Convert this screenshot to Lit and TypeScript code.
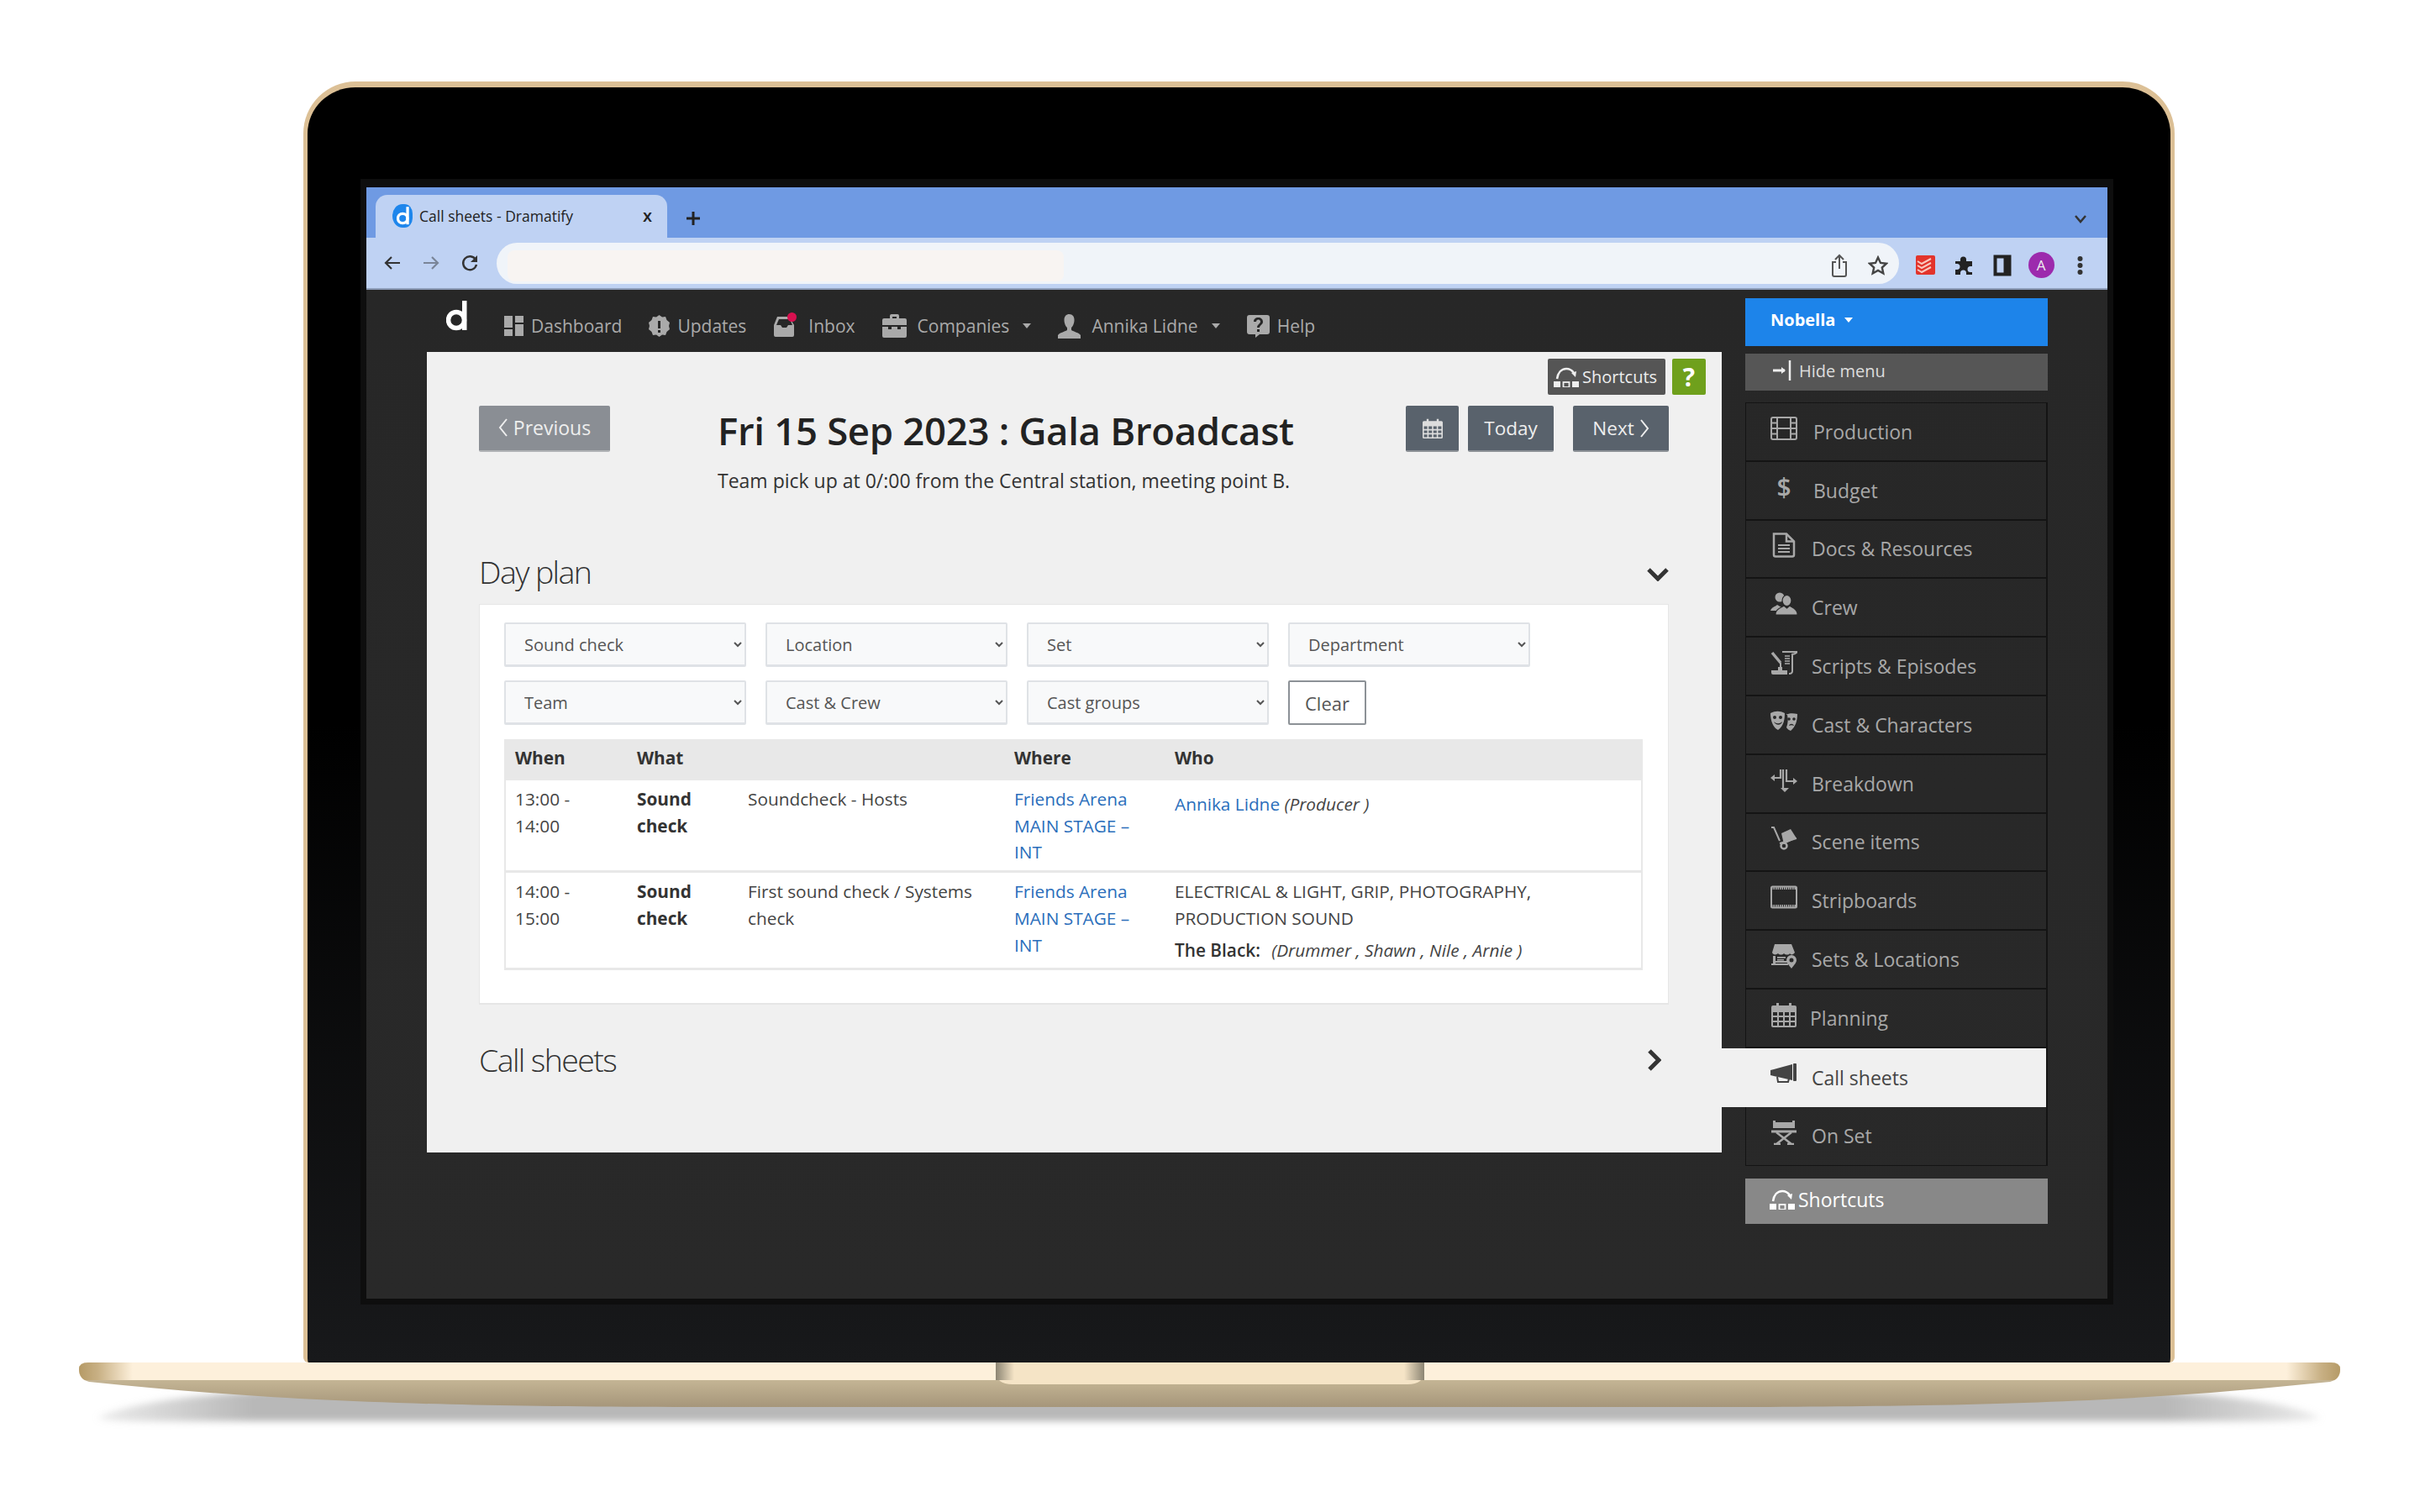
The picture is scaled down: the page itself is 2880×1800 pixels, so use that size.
import { LitElement, html, css } from "lit";
import { customElement } from "lit/decorators.js";

const sideIcons: Record<string, any> = {
  film: html`<svg width="32" height="28" viewBox="0 0 32 28" fill="none" stroke="currentColor" stroke-width="2"><rect x="1" y="1" width="30" height="26" rx="2"/><path d="M8 1v26M24 1v26M1 7.500h7M1 14h7M1 20.500h7M24 7.500h7M24 14h7M24 20.500h7M8 14h16"/></svg>`,
  dollar: html`<span class="dollar">$</span>`,
  doc: html`<svg width="32" height="30" viewBox="0 0 32 30" fill="none" stroke="currentColor" stroke-width="2.500"><path d="M4 1.500h15l9 9v16a2 2 0 0 1-2 2H6a2 2 0 0 1-2-2z"/><path d="M19 1.500v9h9"/><path stroke-width="1.800" d="M9 15h14M9 19h14M9 23h14"/></svg>`,
  crew: html`<svg width="32" height="28" viewBox="0 0 32 28" fill="currentColor"><circle cx="11" cy="6" r="5.500"/><path d="M0 22c1-4 6-5 8-7l5 3-2 4z"/><ellipse cx="19.500" cy="10" rx="5.500" ry="6.500" stroke="#272727" stroke-width="1.200"/><path d="M16 16l3.500 3 3.500-3c2 2 8 3 9 9v2H6v-2c1-6 8-7 10-9z" stroke="#272727" stroke-width="1.200"/></svg>`,
  script: html`<svg width="32" height="30" viewBox="0 0 32 30" fill="none" stroke="currentColor" stroke-width="2"><path d="M14 2h18c-1 2-5 3-7 3M26 4v21c0 2-2 3-4 3"/><path fill="currentColor" stroke="none" d="M1 24h19v5H3a2 2 0 0 1-2-2zM9 20h5v4H9z"/><path stroke-width="3.500" d="M2 3l10 12"/><path stroke-width="1.400" d="M17 7h6M17 10h6M17 13h6M17 16h6"/><path d="M12 15v6"/></svg>`,
  masks: html`<svg width="32" height="26" viewBox="0 0 32 26" fill="currentColor"><path d="M0 3c6-3 11-3 17 0 0 7-1 15-8 20C3 20 0 12 0 3z"/><path d="M18 5c4-2 9-2 14-1 0 8-2 15-8 20-2-1-4-2-5-4 2-5 2-10 1-15z"/><g fill="#272727"><circle cx="5" cy="8" r="2"/><circle cx="12" cy="8" r="2"/><path d="M4 13c3 3 7 3 10 0-1 5-8 5-10 0z"/><circle cx="22" cy="10" r="1.800"/><circle cx="28" cy="10" r="1.800"/><path d="M22 18c1-3 5-3 6 0-2-1-4-1-6 0z"/></g></svg>`,
  split: html`<svg width="32" height="28" viewBox="0 0 32 28" fill="none" stroke="currentColor" stroke-width="2.200"><path d="M2 11h10V1M15 1v22M19 1v14h10"/><path fill="currentColor" stroke="none" d="M0 11l5-4v8zM32 15l-5-4v8zM17 28l-5-5h10z"/></svg>`,
  cart: html`<svg width="32" height="28" viewBox="0 0 32 28" fill="none" stroke="currentColor" stroke-width="2"><path d="M1 1h3l7 16"/><path fill="currentColor" stroke="none" d="M13 8l11-5 7 11-15 7z"/><path d="M11 20l20-6"/><circle cx="16" cy="23" r="3.500" stroke-width="2.500"/></svg>`,
  strip: html`<svg width="32" height="28" viewBox="0 0 32 28" fill="none" stroke="currentColor"><rect x="1" y="1.500" width="30" height="25" rx="1.500" stroke-width="2"/><path stroke-width="3" stroke-dasharray="1.500 1" d="M1 3.500h30M1 24.500h30"/></svg>`,
  store: html`<svg width="32" height="30" viewBox="0 0 32 30" fill="currentColor"><path d="M5 1h20l4 10c-2 3-5 3-6 1-1 2-5 2-7 0-2 2-5 2-7 0-2 2-6 2-7-1z"/><path d="M3 15h3v6h14v2H6v1h15v2H1v-2h2z"/><path d="M8 16h10v1.800H8zM8 19h8v1.500H8z"/><path fill-rule="evenodd" d="M25 14a6 6 0 0 1 6 6c0 3-3 6-6 10-3-4-6-7-6-10a6 6 0 0 1 6-6zm0 3.500a2.500 2.500 0 1 0 0 5 2.500 2.500 0 0 0 0-5z"/></svg>`,
  cal: html`<svg width="30" height="30" viewBox="0 0 30 30" fill="currentColor"><path fill-rule="evenodd" d="M2 4h4V1h3v3h12V1h3v3h4a2 2 0 0 1 2 2v22a2 2 0 0 1-2 2H2a2 2 0 0 1-2-2V6a2 2 0 0 1 2-2zm0 8v4h5v-4zm7 0v4h5v-4zm7 0v4h5v-4zm7 0v4h5v-4zM2 18v4h5v-4zm7 0v4h5v-4zm7 0v4h5v-4zm7 0v4h5v-4zM2 24v4h5v-4zm7 0v4h5v-4zm7 0v4h5v-4zm7 0v4h5v-4z"/></svg>`,
  mega: html`<svg width="32" height="26" viewBox="0 0 32 26" fill="currentColor"><path d="M0 8l4-1 22-6v19L4 15l-4-1z"/><rect x="27" y="0" width="4" height="21" rx="1"/><path fill="none" stroke="currentColor" stroke-width="2" d="M8 16l1 6h12l1-4"/></svg>`,
  chair: html`<svg width="32" height="30" viewBox="0 0 32 30" fill="none" stroke="currentColor" stroke-width="2.500"><path fill="currentColor" stroke="none" d="M3 1h3v2h20V1h3v9H3z"/><path stroke-width="3" d="M1 14h30"/><path d="M7 29L25 15M25 29L7 15M4 29h8M20 29h8"/></svg>`,
};

const shortcutIcon = html`<svg class="sc" width="30" height="24" viewBox="0 0 30 24" fill="currentColor"><path fill="none" stroke="currentColor" stroke-width="2.500" d="M4 14c1-7 5-12 11-12 4 0 7 2 9 5"/><path d="M21 7l6-2-1 7z"/><rect x="0" y="17" width="8" height="7"/><rect x="22" y="17" width="8" height="7"/><rect x="11.500" y="18" width="7" height="6" fill="none" stroke="currentColor" stroke-width="1.800"/></svg>`;

const logo = (c: string, w: number, h: number) => html`<svg width=${w} height=${h} viewBox="0 0 25 36"><circle cx="12" cy="23" r="9.500" fill="none" stroke=${c} stroke-width="5.500"/><path d="M19 0h5.500v35H19z" fill=${c}/></svg>`;

const caret = html`<svg class="caret" width="10" height="6" viewBox="0 0 10 6" fill="currentColor"><path d="M0 0h10L5 6z"/></svg>`;

const rows = [
  ["film", "Production", "t2"], ["dollar", "Budget", "t2"], ["doc", "Docs & Resources", ""],
  ["crew", "Crew", ""], ["script", "Scripts & Episodes", ""], ["masks", "Cast & Characters", ""],
  ["split", "Breakdown", ""], ["cart", "Scene items", ""], ["strip", "Stripboards", ""],
  ["store", "Sets & Locations", ""], ["cal", "Planning", "t0"], ["mega", "Call sheets", "on"], ["chair", "On Set", ""],
];

@customElement("app-root")
export class AppRoot extends LitElement {
  static styles = css`
    :host { display: block; width: 2880px; height: 1800px; background: #fff; overflow: hidden; font-family: "Open Sans", "Liberation Sans", sans-serif; padding-top: 97px; box-sizing: border-box; }
    svg { display: block; flex: none; }
    .lid { margin-left: 361px; width: 2227px; height: 1525px; box-sizing: border-box; border: 5px solid #dcc096; border-top-width: 7px; border-bottom: 0; border-radius: 62px 62px 6px 6px; background: linear-gradient(#000 0, #000 50%, #18191b 100%); padding: 109px 68px 0 63px; }
    .frame { background: #0e0e0e; padding: 10px 7px 7px; height: 1340px; box-sizing: border-box; }
    .screen { height: 1323px; display: flex; flex-direction: column; }
    .tabs { height: 60px; background: #6f9ae3; display: flex; align-items: flex-end; padding-left: 11px; color: #222; flex: none; position: relative; }
    .tab { width: 347px; height: 51px; background: #bfd2f3; border-radius: 14px 14px 0 0; display: flex; align-items: center; box-sizing: border-box; padding: 0 0 2px 20px; font-size: 17.500px; }
    .fav { width: 24px; height: 28px; background: #1e86ec; border-radius: 50% 40% 40% 50%; display: flex; align-items: center; justify-content: center; margin-right: 8px; }
    .tab .x { margin-left: auto; margin-right: 18px; font-weight: 600; font-size: 20px; line-height: 20px; }
    .plus { margin: 0 0 13px 21px; }
    .tchev { margin: 0 24px 17px auto; }
    .bar { height: 62px; flex: none; background: #bfd2f3; border-bottom: 2px solid #8d9cb8; box-sizing: border-box; display: flex; align-items: center; color: #444; padding-left: 19px; }
    .nav-b { width: 24px; display: flex; justify-content: center; margin-right: 22px; }
    .addr { margin-left: 20px; margin-top: 1px; width: 1669px; height: 49px; background: #f0f4f9; border-radius: 25px; display: flex; align-items: center; padding: 0 13px 0 13px; box-sizing: border-box; }
    .patch { width: 662px; height: 37px; background: #f8f4f2; border-radius: 8px; margin-top: 6px; }
    .addr svg { margin-top: 4px; }
    .addr svg:nth-child(2) { margin-left: auto; }
    .addr svg:nth-child(3) { margin-left: 24px; }
    .ext { display: flex; align-items: center; gap: 22px; margin-left: 20px; margin-top: 5px; }
    .todo { width: 23px; height: 23px; background: #e3342b; border-radius: 2px; }
    .ava { width: 31px; height: 31px; border-radius: 50%; background: #9c2aad; color: #eee; display: flex; align-items: center; justify-content: center; font-size: 17px; margin: 0 -2.500px; }
    .dots { margin-left: 7.500px; }
    .app { flex: 1; background: linear-gradient(#272727, #292929); display: flex; min-height: 0; }
    .main { width: 1641px; padding-left: 72px; box-sizing: border-box; flex: none; }
    .top { height: 74px; display: flex; align-items: center; color: #aaa; font-size: 21px; }
    .top .logo { margin: 0 44px 12px 23px; }
    .links { display: flex; align-items: center; gap: 32px; margin-top: 12px; }
    .links > div { display: flex; align-items: center; gap: 8px; position: relative; line-height: 26px; }
    .links .caret { color: #aaa; margin-left: 3px; }
    .g9 { gap: 9px !important; }
    .g13 { gap: 13px !important; }
    .g15 { gap: 15px !important; }
    .dot { position: absolute; width: 11px; height: 11px; border-radius: 50%; background: #d8104f; left: 17px; top: -3px; }
    .panel { width: 1541px; height: 953px; background: #f0f0f0; padding: 8px 63px 0 62px; box-sizing: border-box; color: #333; }
    .tools { display: flex; justify-content: flex-end; gap: 8px; margin-right: -44px; height: 43px; }
    .sc-btn { width: 140px; background: #555; color: #eee; display: flex; align-items: center; gap: 4px; padding-left: 7px; box-sizing: border-box; font-size: 20px; border-radius: 2px; }
    .q { width: 40px; background: #6fa01c; color: #fff; font-weight: 700; font-size: 30px; display: flex; align-items: center; justify-content: center; border-radius: 2px; }
    .head { display: grid; grid-template-columns: 284px 1fr auto; margin-top: 13px; height: 173px; }
    .btn { height: 55px; background: #59626c; color: #eee; font-size: 22.500px; display: flex; align-items: center; justify-content: center; gap: 6px; box-sizing: border-box; border-bottom: 2px solid #8c9196; border-radius: 2px; }
    .prev { width: 156px; background: #8a8e94; border-bottom-color: #b0b2b5; font-size: 23px; padding-bottom: 2px; }
    h1 { margin: 0; font-size: 45.500px; font-weight: 600; color: #222; line-height: 58px; letter-spacing: -0.3px; }
    .sub { margin: 15px 0 0; font-size: 23px; line-height: 32px; color: #333; }
    .h-btns { display: flex; gap: 11px; }
    .h-btns .btn:nth-child(1) { width: 63px; }
    .h-btns .btn:nth-child(2) { width: 102px; margin-right: 12px; }
    .h-btns .btn:nth-child(3) { width: 114px; }
    .sec { display: flex; align-items: center; justify-content: space-between; height: 50px; }
    h2 { margin: 0; font-size: 37.500px; font-weight: 300; color: #333; letter-spacing: -1.600px; line-height: 50px; }
    .box { background: #fff; border: 1px solid #e6e6e6; border-bottom-width: 2px; margin-top: 13px; padding: 21px 30px 44px 29px; box-sizing: border-box; height: 477px; }
    .filters { display: grid; grid-template-columns: repeat(4, 288px); column-gap: 23px; row-gap: 16px; }
    select { height: 53px; width: 288px; background: #f8f9fa; border: 2px solid #dfe2e6; border-bottom-width: 3px; border-radius: 2px; color: #555; font: 20px "Open Sans", sans-serif; padding-left: 18px; }
    .clear { width: 93px; height: 53px; box-sizing: border-box; border: 2px solid #8c9196; background: #fff; color: #555; font: 22px "Open Sans", sans-serif; border-radius: 2px; padding: 0; }
    table { border-collapse: collapse; table-layout: fixed; width: 1355px; margin-top: 17px; font-size: 20.800px; line-height: 31.700px; color: #444; border-left: 2px solid #e8e8e8; border-right: 2px solid #e8e8e8; }
    th { height: 46px; padding: 0 11px; text-align: left; background: #e8e8e8; color: #333; font-weight: 700; }
    td { padding: 7px 11px 5px; vertical-align: top; }
    tr { border-bottom: 3px solid #e8e8e8; }
    td.b { font-weight: 700; color: #333; }
    a { color: #2a6ebb; text-decoration: none; }
    .who1 { padding-top: 6px; }
    .band { margin-top: 6px; color: #333; }
    .band b { font-weight: 600; margin-right: 8px; }
    em { color: #444; }
    .sec2 { margin-top: 41px; }
    .sec2 svg { margin: 0 9px 0 0; }
    .sec1 svg { margin-top: 6px; }
    .side { width: 360px; padding-top: 10px; flex: none; }
    .team { height: 57px; background: #1d84ea; color: #fff; font-weight: 700; font-size: 20px; display: flex; align-items: center; padding: 0 0 6px 30px; gap: 11px; box-sizing: border-box; }
    .hide { height: 44px; margin-top: 9px; background: #565656; color: #ddd; font-size: 20px; display: flex; align-items: center; box-sizing: border-box; padding: 0 0 4px 33px; gap: 9px; }
    .list { margin-top: 14px; border: 1.500px solid #141414; border-right-width: 2px; box-sizing: border-box; height: 909px; margin-bottom: 15px; }
    .row { height: 69.800px; box-sizing: border-box; display: flex; align-items: center; padding-left: 29px; border-bottom: 2px solid #141414; color: #a8a8a8; font-size: 23px; position: relative; }
    .row:last-child { border-bottom: 0; }
    .ic { width: 32px; display: flex; justify-content: center; margin-right: 17px; margin-top: -8px; }
    .row.t2 .ic { margin-right: 19px; }
    .row.t0 .ic { margin-right: 15px; }
    .row.on { background: #f0f0f0; color: #444; margin-left: -29.500px; padding-left: 58.500px; border: 0; }
    .dollar { font-weight: 600; font-size: 30px; line-height: 30px; }
    .sc-bar { height: 54px; background: #888; color: #fff; font-size: 23px; display: flex; align-items: center; padding: 0 0 4px 29px; gap: 4px; box-sizing: border-box; }
    .base { margin-left: 94px; display: block; overflow: visible; }
  `;

  render() {
    return html`
      <div class="lid"><div class="frame"><div class="screen">
        ${this.tabs()}
        ${this.toolbar()}
        <div class="app">
          <div class="main">
            ${this.topnav()}
            ${this.panel()}
          </div>
          ${this.side()}
        </div>
      </div></div></div>
      ${this.base()}
    `;
  }

  tabs() {
    return html`<div class="tabs">
      <div class="tab"><span class="fav">${logo("#fff", 15, 22)}</span>Call sheets - Dramatify<span class="x">x</span></div>
      <svg class="plus" width="20" height="20" viewBox="0 0 20 20" stroke="#222" stroke-width="3"><path d="M10 2v16M2 10h16"/></svg>
      <svg class="tchev" width="16" height="10" viewBox="0 0 16 10" fill="none" stroke="#333" stroke-width="2.500"><path d="M2 1l6 7 6-7"/></svg>
    </div>`;
  }

  toolbar() {
    return html`<div class="bar">
      <span class="nav-b"><svg width="20" height="20" viewBox="0 0 20 20" fill="none" stroke="#333" stroke-width="2.200"><path d="M19 10H2M9 3l-7 7 7 7"/></svg></span>
      <span class="nav-b"><svg width="20" height="20" viewBox="0 0 20 20" fill="none" stroke="#7a8598" stroke-width="2.200"><path d="M1 10h17M11 3l7 7-7 7"/></svg></span>
      <span class="nav-b"><svg width="22" height="22" viewBox="0 0 22 22" fill="none" stroke="#333" stroke-width="2.400"><path d="M18 7a8 8 0 1 0 1 6"/><path fill="#333" stroke="none" d="M20 2v8h-8z"/></svg></span>
      <div class="addr" style="margin-left:-2px">
        <div class="patch"></div>
        <svg width="20" height="28" viewBox="0 0 20 28" fill="none" stroke="#555" stroke-width="2"><path d="M6 10H2v15a2 2 0 0 0 2 2h12a2 2 0 0 0 2-2V10h-4M10 18V2M5 7l5-5 5 5"/></svg>
        <svg width="24" height="24" viewBox="0 0 24 24" fill="none" stroke="#444" stroke-width="2.400"><path d="M12 2.500l3 6.500 7 .8-5.200 4.700 1.500 7L12 17.900l-6.300 3.600 1.500-7L2 9.800 9 9z"/></svg>
      </div>
      <div class="ext">
        <div class="todo"><svg width="23" height="23" viewBox="0 0 23 23" fill="none" stroke="#f9c9c0" stroke-width="2"><path d="M2 7l5 3 11-6M2 12l5 3 11-6M2 17l5 3 11-6"/></svg></div>
        <svg width="25" height="25" viewBox="0 0 25 25" fill="#222"><path d="M2 8h6V6a3.500 3.500 0 0 1 7 0v2h7v6h-2a3.500 3.500 0 0 0 0 7h2v3h-7v-2a3.500 3.500 0 0 0-7 0v2H2v-6h2a3 3 0 0 0 0-7H2z"/></svg>
        <svg width="22" height="26" viewBox="0 0 22 26" fill="none" stroke="#222"><rect x="2.500" y="2.500" width="17" height="21" stroke-width="4"/><path d="M16 3v20" stroke-width="7"/></svg>
        <div class="ava">A</div>
        <svg class="dots" width="7" height="24" viewBox="0 0 7 24" fill="#333"><circle cx="3.500" cy="4" r="3"/><circle cx="3.500" cy="12" r="3"/><circle cx="3.500" cy="20" r="3"/></svg>
      </div>
    </div>`;
  }

  topnav() {
    return html`<div class="top">
      <div class="logo">${logo("#fff", 25, 36)}</div>
      <div class="links">
        <div><svg width="24" height="24" viewBox="0 0 24 24" fill="currentColor"><path d="M0 0h10v14H0zM13 0h10v8H13zM13 10h10v14H13zM0 16h10v8H0z"/></svg>Dashboard</div>
        <div class="g9"><svg width="25" height="27" viewBox="0 0 25 27" fill="currentColor"><path fill-rule="evenodd" d="M12.500 0l3.500 2.500 4-.5 1.500 4 3.500 3-1 4 1 4-3.500 3-1.500 4-4-.5-3.500 2.500-3.500-2.500-4 .5-1.500-4L0 17l1-4-1-4 3.500-3L5 2l4 .5zM11 7v9h3V7zm0 11v3h3v-3z"/></svg>Updates</div>
        <div class="g15"><svg width="27" height="27" viewBox="0 0 27 27" fill="currentColor"><path fill-rule="evenodd" d="M5 2h14l6 10v12a2 2 0 0 1-2 2H3a2 2 0 0 1-2-2V12zm2 3l-3 7h5l2 3h5l2-3h5l-3-7z"/></svg><span class="dot"></span>Inbox</div>
        <div class="g13"><svg width="29" height="28" viewBox="0 0 29 28" fill="currentColor"><path fill-rule="evenodd" d="M9 5V2a2 2 0 0 1 2-2h7a2 2 0 0 1 2 2v3h7a2 2 0 0 1 2 2v6H0V7a2 2 0 0 1 2-2zm3-2v2h5V3zM0 15h7v3h4v-3h7v3h4v-3h7v11a2 2 0 0 1-2 2H2a2 2 0 0 1-2-2z"/></svg>Companies${caret}</div>
        <div class="g13"><svg width="27" height="29" viewBox="0 0 27 29" fill="currentColor"><path d="M13.500 0c4 0 6 3 6 7s-2 8-3.500 9v3c3 2 9 3 11 6v4H0v-4c2-3 8-4 11-6v-3c-1.500-1-3.500-5-3.500-9s2-7 6-7z"/></svg>Annika Lidne${caret}</div>
        <div class="g9"><svg width="27" height="27" viewBox="0 0 27 27" fill="currentColor"><path fill-rule="evenodd" d="M3 0h21a3 3 0 0 1 3 3v17a3 3 0 0 1-3 3h-9l-5 4v-4H3a3 3 0 0 1-3-3V3a3 3 0 0 1 3-3zm10.500 3C10 3 8 5 8 8h3c0-1.500 1-2.500 2.500-2.500S16 6.500 16 8c0 2.500-4 3-4 7h3c0-3 4-3.500 4-7 0-3-2.500-5-5.500-5zM12 17v3h3v-3z"/></svg>Help</div>
      </div>
    </div>`;
  }

  panel() {
    return html`<div class="panel">
      <div class="tools"><div class="sc-btn">${shortcutIcon}Shortcuts</div><div class="q">?</div></div>
      <div class="head">
        <div class="btn prev"><svg width="12" height="24" viewBox="0 0 12 24" fill="none" stroke="currentColor" stroke-width="2"><path d="M10 2L2 12l8 10"/></svg>Previous</div>
        <div><h1>Fri 15 Sep 2023 : Gala Broadcast</h1><p class="sub">Team pick up at 0/:00 from the Central station, meeting point B.</p></div>
        <div class="h-btns">
          <div class="btn"><svg width="24" height="30" viewBox="0 0 30 30" fill="#ddd"><path fill-rule="evenodd" d="M2 4h4V1h3v3h12V1h3v3h4a2 2 0 0 1 2 2v22a2 2 0 0 1-2 2H2a2 2 0 0 1-2-2V6a2 2 0 0 1 2-2zm0 8v4h5v-4zm7 0v4h5v-4zm7 0v4h5v-4zm7 0v4h5v-4zM2 18v4h5v-4zm7 0v4h5v-4zm7 0v4h5v-4zm7 0v4h5v-4zM2 24v4h5v-4zm7 0v4h5v-4zm7 0v4h5v-4zm7 0v4h5v-4z"/></svg></div>
          <div class="btn">Today</div>
          <div class="btn">Next<svg width="12" height="24" viewBox="0 0 12 24" fill="none" stroke="currentColor" stroke-width="2"><path d="M2 2l8 10-8 10"/></svg></div>
        </div>
      </div>
      <div class="sec sec1"><h2>Day plan</h2><svg width="26" height="16" viewBox="0 0 26 16" fill="none" stroke="#333" stroke-width="5"><path d="M2 2l11 11L24 2"/></svg></div>
      <div class="box">
        <div class="filters">
          ${["Sound check", "Location", "Set", "Department", "Team", "Cast & Crew", "Cast groups"].map((o) => html`<select><option>${o}</option></select>`)}
          <button class="clear">Clear</button>
        </div>
        <table>
          <colgroup><col style="width:146px"><col style="width:132px"><col style="width:317px"><col style="width:191px"><col></colgroup>
          <thead><tr><th>When</th><th>What</th><th></th><th>Where</th><th>Who</th></tr></thead>
          <tbody>
            <tr><td>13:00 - 14:00</td><td class="b">Sound check</td><td>Soundcheck - Hosts</td><td><a>Friends Arena MAIN STAGE – INT</a></td><td><div class="who1"><a>Annika Lidne</a> <em>(Producer )</em></div></td></tr>
            <tr><td>14:00 - 15:00</td><td class="b">Sound check</td><td>First sound check / Systems check</td><td><a>Friends Arena MAIN STAGE – INT</a></td><td>ELECTRICAL &amp; LIGHT, GRIP, PHOTOGRAPHY, PRODUCTION SOUND<div class="band"><b>The Black:</b> <em>(Drummer , Shawn , Nile , Arnie )</em></div></td></tr>
          </tbody>
        </table>
      </div>
      <div class="sec sec2"><h2>Call sheets</h2><svg width="16" height="26" viewBox="0 0 16 26" fill="none" stroke="#333" stroke-width="5"><path d="M2 2l11 11L2 24"/></svg></div>
    </div>`;
  }

  side() {
    return html`<div class="side">
      <div class="team">Nobella${caret}</div>
      <div class="hide"><svg width="22" height="24" viewBox="0 0 22 24" fill="none" stroke="#eee"><path d="M0 12h14" stroke-width="3"/><path d="M10 8l5 4-5 4z" fill="#eee" stroke="none"/><path d="M20 0v24" stroke-width="2.500"/></svg>Hide menu</div>
      <div class="list">
        ${rows.map(([i, t, c]) => html`<div class="row ${c}"><span class="ic">${sideIcons[i]}</span>${t}</div>`)}
      </div>
      <div class="sc-bar">${shortcutIcon}Shortcuts</div>
    </div>`;
  }

  base() {
    return html`<svg class="base" width="2691" height="53" viewBox="0 0 2691 53">
      <defs>
        <linearGradient id="low" x1="0" y1="0" x2="0" y2="1"><stop offset="0" stop-color="#d8c9a6"/><stop offset="1" stop-color="#a6967a"/></linearGradient>
        <linearGradient id="el" x1="0" x2="1"><stop offset="0" stop-color="#b59a66"/><stop offset="0.3" stop-color="#c8b084"/><stop offset="0.85" stop-color="#fdf0db"/></linearGradient>
        <linearGradient id="er" x1="1" x2="0"><stop offset="0" stop-color="#b59a66"/><stop offset="0.3" stop-color="#c8b084"/><stop offset="0.85" stop-color="#fdf0db"/></linearGradient>
        <linearGradient id="nl" x1="0" x2="1"><stop offset="0" stop-color="#8c8573"/><stop offset="1" stop-color="#f5e4c6"/></linearGradient>
        <linearGradient id="nr" x1="1" x2="0"><stop offset="0" stop-color="#8c8573"/><stop offset="1" stop-color="#f5e4c6"/></linearGradient>
        <linearGradient id="sh" x1="0" x2="1"><stop offset="0" stop-color="#b4b4b4" stop-opacity=".25"/><stop offset=".07" stop-color="#b8b8b8"/><stop offset=".93" stop-color="#b8b8b8"/><stop offset="1" stop-color="#b4b4b4" stop-opacity=".25"/></linearGradient>
        <filter id="bl" x="-2%" y="-30%" width="104%" height="160%"><feGaussianBlur stdDeviation="4"/></filter>
        <clipPath id="body"><path d="M0 8Q0 20 12 23C200 42 360 53 750 53H1941C2331 53 2491 42 2679 23Q2691 20 2691 8Q2691 0 2680 0H11Q0 0 0 8Z"/></clipPath>
      </defs>
      <path d="M22 66Q80 36 320 30H2370Q2610 36 2668 66Q2650 70 2600 70H90Q30 70 22 66Z" fill="url(#sh)" filter="url(#bl)"/>
      <g clip-path="url(#body)">
        <rect width="2691" height="53" fill="url(#low)"/>
        <rect width="2691" height="21" fill="#fdf0db"/>
        <rect width="75" height="21" fill="url(#el)"/>
        <rect x="2616" width="75" height="21" fill="url(#er)"/>
        <path d="M1091 0H1601V10Q1601 26 1581 26H1111Q1091 26 1091 10Z" fill="#f5e4c6"/>
        <rect x="1091" width="22" height="21" fill="url(#nl)"/>
        <rect x="1577" width="24" height="21" fill="url(#nr)"/>
      </g>
    </svg>`;
  }
}
